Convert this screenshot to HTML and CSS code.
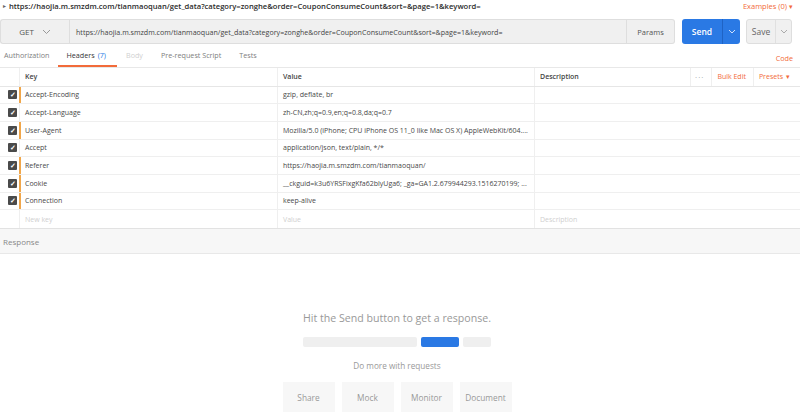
FILE: index.html
```html
<!DOCTYPE html>
<html lang="en">
<head>
<meta charset="UTF-8">
<title>Request</title>
<link rel="stylesheet" href="styles.css">
</head>
<body>

<!-- Request name line -->
<div class="title-bar">
  <span class="caret">&#9656;</span>
  <span class="title-url">https://haojia.m.smzdm.com/tianmaoquan/get_data?category=zonghe&amp;order=CouponConsumeCount&amp;sort=&amp;page=1&amp;keyword=</span>
  <span class="examples">Examples (0) <span class="tri">&#9662;</span></span>
</div>

<!-- URL bar -->
<div class="request-bar">
  <div class="method">GET
    <svg width="9" height="6" viewBox="0 0 9 6"><path d="M1 1l3.5 3.5L8 1" fill="none" stroke="#999" stroke-width="1"/></svg>
  </div>
  <div class="url-input">https://haojia.m.smzdm.com/tianmaoquan/get_data?category=zonghe&amp;order=CouponConsumeCount&amp;sort=&amp;page=1&amp;keyword=</div>
  <div class="params">Params</div>
  <div class="send">
    <span class="send-label">Send</span>
    <span class="send-drop"><svg width="8" height="5" viewBox="0 0 8 5"><path d="M1 1l3 3 3-3" fill="none" stroke="#cfe0fb" stroke-width="1"/></svg></span>
  </div>
  <div class="save">
    <span class="save-label">Save</span>
    <span class="save-drop"><svg width="8" height="5" viewBox="0 0 8 5"><path d="M1 1l3 3 3-3" fill="none" stroke="#aaa" stroke-width="1"/></svg></span>
  </div>
</div>

<!-- Tabs -->
<div class="tabs">
  <span class="tab">Authorization</span>
  <span class="tab active">Headers <span class="count">(7)</span></span>
  <span class="tab disabled">Body</span>
  <span class="tab">Pre-request Script</span>
  <span class="tab">Tests</span>
  <span class="code-link">Code</span>
</div>

<!-- Headers table -->
<div class="headers">
  <div class="row head">
    <div class="check"></div>
    <div class="cell key">Key</div>
    <div class="cell value">Value</div>
    <div class="cell desc">Description
      <span class="actions">
        <span class="dots">&middot;&middot;&middot;</span>
        <span class="bulk">Bulk Edit</span>
        <span class="presets">Presets <span class="tri">&#9662;</span></span>
      </span>
    </div>
  </div>
  <div class="row">
    <div class="check"><span class="box">&#10003;</span></div>
    <div class="cell key edited">Accept-Encoding</div>
    <div class="cell value">gzip, deflate, br</div>
    <div class="cell desc"></div>
  </div>
  <div class="row">
    <div class="check"><span class="box">&#10003;</span></div>
    <div class="cell key">Accept-Language</div>
    <div class="cell value">zh-CN,zh;q=0.9,en;q=0.8,da;q=0.7</div>
    <div class="cell desc"></div>
  </div>
  <div class="row">
    <div class="check"><span class="box">&#10003;</span></div>
    <div class="cell key edited">User-Agent</div>
    <div class="cell value">Mozilla/5.0 (iPhone; CPU iPhone OS 11_0 like Mac OS X) AppleWebKit/604....</div>
    <div class="cell desc"></div>
  </div>
  <div class="row">
    <div class="check"><span class="box">&#10003;</span></div>
    <div class="cell key">Accept</div>
    <div class="cell value">application/json, text/plain, */*</div>
    <div class="cell desc"></div>
  </div>
  <div class="row">
    <div class="check"><span class="box">&#10003;</span></div>
    <div class="cell key edited">Referer</div>
    <div class="cell value">https://haojia.m.smzdm.com/tianmaoquan/</div>
    <div class="cell desc"></div>
  </div>
  <div class="row">
    <div class="check"><span class="box">&#10003;</span></div>
    <div class="cell key edited">Cookie</div>
    <div class="cell value">__ckguid=k3u6YRSFixgKfa62blyUga6; _ga=GA1.2.679944293.1516270199; ...</div>
    <div class="cell desc"></div>
  </div>
  <div class="row">
    <div class="check"><span class="box">&#10003;</span></div>
    <div class="cell key edited">Connection</div>
    <div class="cell value">keep-alive</div>
    <div class="cell desc"></div>
  </div>
  <div class="row new">
    <div class="check"></div>
    <div class="cell key">New key</div>
    <div class="cell value">Value</div>
    <div class="cell desc">Description</div>
  </div>
</div>

<!-- Response -->
<div class="response-bar">Response</div>

<div class="empty">
  <p class="hint">Hit the Send button to get a response.</p>
  <div class="sketch">
    <span class="bar grey long"></span>
    <span class="bar blue"></span>
    <span class="bar grey short"></span>
  </div>
  <p class="more">Do more with requests</p>
  <div class="more-buttons">
    <span class="more-btn">Share</span>
    <span class="more-btn">Mock</span>
    <span class="more-btn">Monitor</span>
    <span class="more-btn">Document</span>
  </div>
</div>

</body>
</html>
```

FILE: styles.css
```css
body {
  margin: 0;
  font-family: "Open Sans", "Noto Sans", sans-serif;
  color: #505050;
  background-color: #fff;
  width: 800px;
  height: 412px;
  overflow: hidden;
}

/* Title line */
.title-bar {
  height: 12px;
  display: flex;
  align-items: center;
  padding: 0 5px 0 3px;
  font-size: 7.6px;
  color: #2b2b2b;
}

.title-bar .caret {
  font-size: 6px;
  color: #666;
  margin-right: 3px;
}

.title-url {
  flex: 1;
  font-weight: 600;
}

.examples {
  color: #f26b3a;
  font-size: 7.5px;
  margin-right: 2px;
}

.tri {
  font-size: 6.5px;
}

/* Request bar */
.request-bar {
  display: flex;
  height: 25px;
  margin-top: 7px;
  padding-right: 8px;
  font-size: 7.5px;
}

.method {
  width: 69px;
  box-sizing: border-box;
  display: flex;
  align-items: center;
  justify-content: center;
  gap: 8px;
  background-color: #f0f0f0;
  border: 1px solid #dedede;
  border-right: none;
  border-radius: 3px 0 0 3px;
  color: #555;
  font-size: 8px;
}

.url-input {
  flex: 1;
  display: flex;
  align-items: center;
  padding-left: 6px;
  background-color: #f0f0f0;
  border: 1px solid #dedede;
  color: #444;
  font-size: 7.1px;
}

.params {
  width: 47px;
  display: flex;
  align-items: center;
  justify-content: center;
  background-color: #f0f0f0;
  border: 1px solid #dedede;
  border-left: none;
  border-radius: 0 3px 3px 0;
  color: #555;
}

.send {
  width: 58px;
  margin-left: 7px;
  display: flex;
  background-color: #2a79e4;
  border-radius: 3px;
  color: #fff;
  font-weight: 600;
  font-size: 8.5px;
}

.send-label {
  flex: 1;
  display: flex;
  align-items: center;
  justify-content: center;
}

.send-drop {
  width: 17px;
  display: flex;
  align-items: center;
  justify-content: center;
  border-left: 1px solid #1f63c4;
}

.save {
  width: 46px;
  margin-left: 6px;
  box-sizing: border-box;
  display: flex;
  background-color: #f0f0f0;
  border: 1px solid #dedede;
  border-radius: 3px;
  color: #666;
  font-size: 8.5px;
}

.save-label {
  flex: 1;
  display: flex;
  align-items: center;
  justify-content: center;
}

.save-drop {
  width: 15px;
  display: flex;
  align-items: center;
  justify-content: center;
  border-left: 1px solid #e0e0e0;
}

/* Tabs */
.tabs {
  display: flex;
  align-items: stretch;
  height: 23px;
  font-size: 7.2px;
  border-bottom: 1px solid #e8e8e8;
}

.tab {
  display: flex;
  align-items: center;
  padding: 0 9px;
  color: #808080;
  border-bottom: 2px solid transparent;
}

.tab:first-child {
  padding-left: 4px;
}

.tab.active {
  color: #333;
  border-bottom-color: #f26b3a;
  padding: 0 11px 0 8px;
}

.tab.active .count {
  color: #2a79e4;
  margin-left: 3px;
}

.tab.disabled {
  color: #d0d0d0;
}

.code-link {
  margin-left: auto;
  padding: 9px 7px 0 0;
  color: #f26b3a;
}

/* Headers table */
.headers {
  font-size: 7px;
  color: #484848;
  border-bottom: 1px solid #e2e2e2;
}

.row {
  display: grid;
  grid-template-columns: 19px 258px 257px 1fr;
  height: 17.7px;
  border-bottom: 1px solid #efefef;
  box-sizing: border-box;
}

.row:last-child {
  border-bottom: none;
}

.row.head {
  height: 18.5px;
  font-weight: 600;
  color: #444;
  border-bottom: 1px solid #e6e6e6;
}

.check {
  display: flex;
  align-items: center;
  justify-content: flex-end;
  padding-right: 2px;
}

.box {
  width: 9px;
  height: 9px;
  background-color: #4a4a4a;
  border-radius: 1px;
  color: #fff;
  font-size: 7px;
  line-height: 9px;
  text-align: center;
  font-weight: 700;
}

.cell {
  display: flex;
  align-items: center;
  padding-left: 5px;
  border-left: 1px solid #efefef;
  white-space: nowrap;
  overflow: hidden;
}

.cell.key.edited {
  border-left: 2px solid #f0a64a;
  padding-left: 4px;
}

.row.new .cell {
  color: #cfcfcf;
}

.actions {
  margin-left: auto;
  display: flex;
  align-self: stretch;
  font-weight: 400;
  color: #f26b3a;
}

.actions span {
  display: flex;
  align-items: center;
  border-left: 1px solid #efefef;
}

.actions .dots {
  color: #999;
  font-size: 8px;
  letter-spacing: 1px;
  padding: 0 7px 0 4px;
}

.actions .bulk {
  padding: 0 7px 0 5px;
}

.actions .presets {
  padding: 0 10px 0 5px;
}

.actions .presets .tri {
  border-left: none;
  margin-left: 3px;
}

/* Response */
.response-bar {
  height: 24px;
  display: flex;
  align-items: center;
  padding-left: 3px;
  background-color: #f7f7f7;
  border-bottom: 1px solid #e8e8e8;
  color: #888;
  font-size: 8px;
}

.empty {
  display: flex;
  flex-direction: column;
  align-items: center;
  padding-right: 6px;
}

.hint {
  margin: 57px 0 0 0;
  font-size: 10.6px;
  color: #999;
}

.sketch {
  display: flex;
  gap: 4px;
  margin-top: 12px;
}

.bar {
  height: 10px;
  border-radius: 2px;
  background-color: #efefef;
}

.bar.long {
  width: 114px;
}

.bar.blue {
  width: 38px;
  background-color: #2a79e4;
}

.bar.short {
  width: 28px;
}

.more {
  margin: 13px 0 0 0;
  font-size: 8.2px;
  color: #999;
}

.more-buttons {
  display: flex;
  gap: 7px;
  margin-top: 11px;
}

.more-btn {
  width: 52px;
  height: 30px;
  display: flex;
  align-items: center;
  justify-content: center;
  background-color: #f7f7f7;
  color: #999;
  font-size: 8.3px;
}
```
